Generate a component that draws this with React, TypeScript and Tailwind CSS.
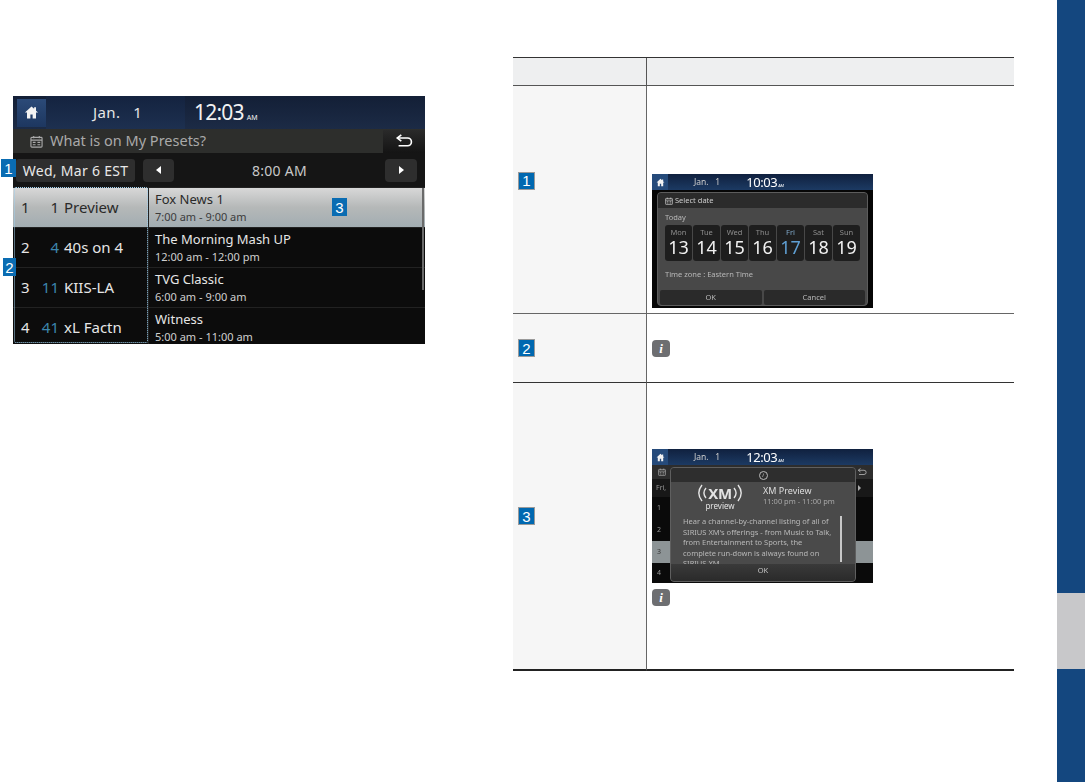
const font = "font-['Noto_Sans',sans-serif]";

const HomeIcon = ({ size }: { size: number }) => (
  <svg width={size} height={size} viewBox="0 0 16 16" fill="#f2f2f2">
    <path d="M8 1.5L1 8h2.2v6.5h3.6V10h2.4v4.5h3.6V8H15l-2.2-2V2.5h-2v1.6z" />
  </svg>
);

const BackIcon = ({ size }: { size: number }) => (
  <svg width={size} height={size * 0.75} viewBox="0 0 20 15" fill="none" stroke="currentColor" strokeWidth="1.8">
    <path d="M7 1L2.5 4.5 7 8" />
    <path d="M2.5 4.5H14a4 4 0 0 1 0 8.5H4" />
  </svg>
);

const CalIcon = ({ size }: { size: number }) => (
  <svg width={size} height={size} viewBox="0 0 14 14" fill="none" stroke="currentColor" strokeWidth="1.2">
    <rect x="1" y="2.5" width="12" height="10.5" rx="1" />
    <path d="M1 5.5H13M4 1V3.5M10 1V3.5M3 8H6M8 8H11M3 10.5H6M8 10.5H11" />
  </svg>
);

const Badge = ({ n }: { n: number }) => (
  <div className="flex h-[18px] w-[17px] items-center justify-center border border-[#9a9a9a] bg-[#0068b0] text-[15px] leading-none text-white font-['Liberation_Sans',sans-serif]">
    {n}
  </div>
);

const MarkerOnShot = ({ n, cls }: { n: number; cls: string }) => (
  <div className={`absolute flex h-[18px] items-center justify-center bg-[#0a6cb2] text-[15px] leading-none text-white font-['Liberation_Sans',sans-serif] ${cls}`}>
    {n}
  </div>
);

const InfoIcon = () => (
  <div className="flex h-[17px] w-[18px] items-center justify-center rounded-[4px] bg-[#6d6e71] text-[13px] font-bold italic leading-none text-white font-['Liberation_Serif',serif]">
    i
  </div>
);

const rows = [
  { no: '1', ch: '1', name: 'Preview', title: 'Fox News 1', time: '7:00 am - 9:00 am', active: true },
  { no: '2', ch: '4', name: '40s on 4', title: 'The Morning Mash UP', time: '12:00 am - 12:00 pm' },
  { no: '3', ch: '11', name: 'KIIS-LA', title: 'TVG Classic', time: '6:00 am - 9:00 am' },
  { no: '4', ch: '41', name: 'xL Factn', title: 'Witness', time: '5:00 am - 11:00 am' },
];

const MainScreen = () => (
  <div className={`relative ml-[13px] mt-[96px] h-[248px] w-[412px] overflow-hidden bg-black ${font}`}>
    {/* status bar */}
    <div className="flex h-[33px] items-center bg-gradient-to-b from-[#131f36] to-[#1c2b46] text-white">
      <div className="ml-[4px] flex h-[28px] w-[29px] items-center justify-center bg-gradient-to-b from-[#2b4a78] to-[#1d3760]">
        <HomeIcon size={15} />
      </div>
      <div className="flex h-full w-[139px] items-center bg-gradient-to-b from-[#14233f] to-[#1d3050] pl-[47px] text-[15px] tracking-wide text-[#e6e6e6]">
        Jan.&nbsp;&nbsp;&nbsp;1
      </div>
      <div className="flex items-baseline pl-[9px] text-[21px] tracking-[-0.8px] text-[#f2f2f2]">
        12:03<span className="ml-[3px] text-[7px] tracking-normal">AM</span>
      </div>
    </div>
    {/* title */}
    <div className="flex h-[24px] items-center bg-[#2d2e2c] text-[#a9a9a9]">
      <div className="ml-[17px]">
        <CalIcon size={13} />
      </div>
      <span className="ml-[7px] text-[14.5px]">What is on My Presets?</span>
      <div className="ml-auto flex h-[23px] w-[42px] items-center justify-center bg-gradient-to-b from-[#2a2a2a] to-[#141414] text-white">
        <BackIcon size={18} />
      </div>
    </div>
    {/* date row */}
    <div className="flex h-[34px] items-center bg-[#151515] text-[#dedede]">
      <div className="ml-[3px] flex h-[23px] w-[119px] items-center justify-center rounded-[3px] bg-[#2e2e2e] text-[14px] tracking-[0.3px] text-[#e8e8e8]">
        Wed, Mar 6 EST
      </div>
      <div className="ml-[8px] flex h-[23px] w-[31px] items-center justify-center rounded-[4px] bg-[#2e2e2e]">
        <div className="h-0 w-0 border-y-[4px] border-r-[5px] border-y-transparent border-r-white" />
      </div>
      <div className="flex-1 text-center text-[14px] tracking-[0.3px] text-[#c8c8c8]">8:00 AM</div>
      <div className="mr-[8px] flex h-[23px] w-[32px] items-center justify-center rounded-[4px] bg-[#2e2e2e]">
        <div className="h-0 w-0 border-y-[4px] border-l-[5px] border-y-transparent border-l-white" />
      </div>
    </div>
    {/* list */}
    <div className="flex flex-col gap-[1px] bg-[#222] pt-[1px]">
      {rows.map((r) => (
        <div
          key={r.no}
          className={`flex h-[39px] shrink-0 ${r.active ? 'bg-gradient-to-b from-[#d8d8d8] via-[#b5b8b8] to-[#a2adb2] text-[#2a2a2a]' : 'bg-[#0c0c0c] text-[#e6e6e6]'}`}
        >
          <div className="flex w-[135px] items-center pl-[8px] text-[15px]">
            <span className="w-[20px]">{r.no}</span>
            <span className={`w-[18px] text-right ${r.active ? '' : 'text-[#3d86ad]'}`}>{r.ch}</span>
            <span className="ml-[5px]">{r.name}</span>
          </div>
          <div className="flex flex-1 flex-col justify-center border-l border-[#222] pl-[6px]">
            <div className="text-[13px] leading-[18px]">{r.title}</div>
            <div className={`text-[11px] leading-[18px] ${r.active ? 'text-[#3c3c3c]' : 'text-[#d0d0d0]'}`}>{r.time}</div>
          </div>
        </div>
      ))}
    </div>
    {/* scrollbar and dotted selection */}
    <div className="absolute right-[1px] top-[92px] h-[102px] w-[2px] bg-[#6a6a6a]" />
    <div className="absolute left-[1px] top-[91px] h-[156px] w-[134px] rounded-[2px] border border-dotted border-[#9fd0ee]" />
  </div>
);

const SmallBar = ({ time }: { time: string }) => (
  <div className="flex h-[16px] items-center bg-gradient-to-b from-[#10213f] to-[#1c3a63] text-white">
    <div className="flex h-full w-[16px] items-center justify-center bg-[#254a7a]">
      <HomeIcon size={9} />
    </div>
    <span className="ml-[26px] text-[8.5px] leading-none text-[#ccc]">Jan.&nbsp;&nbsp;&nbsp;1</span>
    <span className="ml-[26px] flex items-baseline text-[13px] leading-none tracking-[-0.4px]">
      {time}
      <span className="ml-[1px] text-[4px]">AM</span>
    </span>
  </div>
);

const days = [
  ['Mon', '13'],
  ['Tue', '14'],
  ['Wed', '15'],
  ['Thu', '16'],
  ['Fri', '17'],
  ['Sat', '18'],
  ['Sun', '19'],
];

const DateShot = () => (
  <div className={`h-[134px] w-[221px] overflow-hidden bg-[#060606] blur-[0.3px] ${font}`}>
    <SmallBar time="10:03" />
    <div className="mx-[5px] mt-[2px] h-[114px] overflow-hidden rounded-[4px] border border-[#5c5c5c] bg-[#484848] text-[#b8b8b8]">
      <div className="flex h-[15px] items-center bg-[#2b2b2b] pl-[7px] text-[7.5px] text-[#ccc]">
        <span className="mr-[2px]"><CalIcon size={8} /></span>
        Select date
      </div>
      <div className="pl-[7px] pt-[3px] text-[7.5px] leading-[12px]">Today</div>
      <div className="mt-[2px] flex gap-[1px] px-[7px]">
        {days.map(([d, n]) => (
          <div key={d} className="flex h-[36px] w-[27px] flex-col items-center rounded-[3px] bg-[#1e1e1e] pt-[2px]">
            <span className={`text-[7.5px] leading-[10px] ${d === 'Fri' ? 'text-[#7fa8c9]' : 'text-[#8d8d8d]'}`}>{d}</span>
            <span className={`text-[18px] leading-[21px] ${d === 'Fri' ? 'text-[#5f9fd3]' : 'text-[#f2f2f2]'}`}>{n}</span>
          </div>
        ))}
      </div>
      <div className="pl-[7px] pt-[7px] text-[7.5px] leading-[12px]">Time zone : Eastern Time</div>
      <div className="mt-[10px] flex gap-[2px] px-[2px] text-[7.5px]">
        <div className="flex h-[15px] flex-1 items-center justify-center rounded-[2px] bg-[#2a2a2a]">OK</div>
        <div className="flex h-[15px] flex-1 items-center justify-center rounded-[2px] bg-[#2a2a2a]">Cancel</div>
      </div>
    </div>
  </div>
);

const XmLogo = () => (
  <div className="flex w-[70px] flex-col items-center text-[#e4e4e4]">
    <div className="flex items-center">
      <svg width="10" height="20" viewBox="1 0 10 20" fill="none" stroke="currentColor" strokeWidth="1.4">
        <path d="M5 2C1 7 1 13 5 18" />
        <path d="M9 5C6.5 8 6.5 12 9 15" />
      </svg>
      <span className="text-[15px] font-bold leading-none tracking-[-0.3px]">XM</span>
      <svg width="10" height="20" viewBox="1 0 10 20" fill="none" stroke="currentColor" strokeWidth="1.4">
        <path d="M7 2C11 7 11 13 7 18" />
        <path d="M3 5C5.5 8 5.5 12 3 15" />
      </svg>
    </div>
    <span className="-mt-[2px] text-[8px] leading-[10px]">preview</span>
  </div>
);

const PreviewShot = () => (
  <div className={`relative h-[134px] w-[221px] overflow-hidden bg-[#0a0a0a] blur-[0.3px] ${font}`}>
    <SmallBar time="12:03" />
    <div className="flex h-[14px] items-center justify-between bg-[#2d2d2d] px-[6px] text-[#aaa]">
      <CalIcon size={8} />
      <BackIcon size={10} />
    </div>
    <div className="flex h-[18px] items-center justify-between bg-[#181818] pl-[4px] pr-[12px] text-[7px] text-[#999]">
      Fri,
      <div className="h-0 w-0 border-y-[3px] border-l-[3px] border-y-transparent border-l-[#aaa]" />
    </div>
    <div className="text-[7px] text-[#999]">
      <div className="flex h-[22px] items-center pl-[5px]">1</div>
      <div className="flex h-[22px] items-center pl-[5px]">2</div>
      <div className="flex h-[22px] items-center bg-[#8d9496] pl-[5px] text-[#333]">3</div>
      <div className="flex h-[20px] items-center pl-[5px]">4</div>
    </div>
    {/* popup */}
    <div className="absolute left-[18px] top-[18px] h-[115px] w-[186px] overflow-hidden rounded-[4px] border border-[#5f5f5f] bg-[#4a4a4a] text-[#c4c4c4]">
      <div className="flex h-[14px] items-center justify-center bg-[#2e2e2e]">
        <div className="flex h-[9px] w-[9px] items-center justify-center rounded-full border border-[#bbb] text-[6px] italic leading-none">i</div>
      </div>
      <div className="flex pl-[14px] pt-[1px]">
        <XmLogo />
        <div className="ml-[8px] pt-[2px]">
          <div className="text-[9px] leading-[12px] text-[#ddd]">XM Preview</div>
          <div className="text-[7.5px] leading-[9px] text-[#a8a8a8]">11:00 pm - 11:00 pm</div>
        </div>
      </div>
      <div className="relative mt-[5px] h-[48px] overflow-hidden pl-[12px] pr-[20px] text-[7.5px] leading-[10.5px] text-[#b8b8b8]">
        Hear a channel-by-channel listing of all of SIRIUS XM's offerings - from Music to Talk, from Entertainment to Sports, the complete run-down is always found on SIRIUS XM.
        <div className="absolute right-[13px] top-0 h-[46px] w-[2px] bg-[#c8c8c8]" />
      </div>
      <div className="flex h-[17px] items-center justify-center bg-gradient-to-b from-[#3a3a3a] to-[#2a2a2a] pb-[3px] text-[7.5px]">OK</div>
    </div>
  </div>
);

export default function App() {
  return (
    <div className="relative flex h-[782px] w-[1085px] overflow-hidden bg-white">
      <div className="w-[513px] shrink-0">
        <MainScreen />
      </div>

      <div className="mt-[57px] w-[501px] shrink-0">
        <div className="grid grid-cols-[134px_1fr] border-t border-t-[#333]">
          <div className="h-[28px] border-r border-b border-[#555] bg-[#eeeff0]" />
          <div className="h-[28px] border-b border-[#555] bg-[#eeeff0]" />

          <div className="flex h-[228px] items-center border-r border-b border-[#666] bg-[#f6f6f6] pb-[38px] pl-[5px]">
            <Badge n={1} />
          </div>
          <div className="h-[228px] border-b border-[#666] pl-[5px] pt-[88px]">
            <DateShot />
          </div>

          <div className="flex h-[69px] items-center border-r border-b border-r-[#666] border-b-[#333] bg-[#f6f6f6] pl-[5px]">
            <Badge n={2} />
          </div>
          <div className="flex h-[69px] items-center border-b border-[#333] pl-[5px]">
            <InfoIcon />
          </div>

          <div className="flex h-[288px] items-center border-r border-b-2 border-r-[#666] border-b-[#222] bg-[#f6f6f6] pb-[20px] pl-[5px]">
            <Badge n={3} />
          </div>
          <div className="h-[288px] border-b-2 border-[#222] pl-[5px] pt-[66px]">
            <PreviewShot />
            <div className="mt-[6px]">
              <InfoIcon />
            </div>
          </div>
        </div>
      </div>

      <div className="ml-auto flex w-[28px] shrink-0 flex-col">
        <div className="h-[593px] bg-[#14477f]" />
        <div className="h-[76px] bg-[#c8c8ca]" />
        <div className="flex-1 bg-[#14477f]" />
      </div>

      <MarkerOnShot n={1} cls="left-[1px] top-[159px] w-[15px]" />
      <MarkerOnShot n={2} cls="left-[3px] top-[258px] w-[13px]" />
      <MarkerOnShot n={3} cls="left-[332px] top-[198px] w-[15px]" />
    </div>
  );
}
